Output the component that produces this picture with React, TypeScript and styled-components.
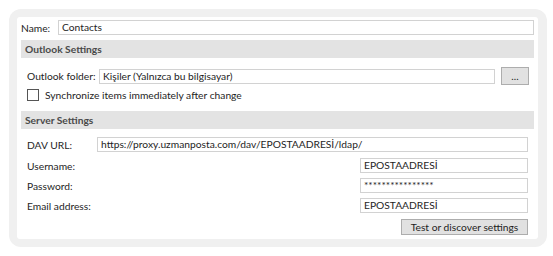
import React from 'react';
import styled, { createGlobalStyle } from 'styled-components';

const GlobalStyle = createGlobalStyle`
    html, body {
        margin: 0;
        padding: 0;
        background: #fff;
    }
    body {
        font-family: Lato, 'Open Sans', sans-serif;
        font-size: 10.25px;
        color: #1e1e1e;
    }
`;

const Frame = styled.div`
    margin: 9px 0 0 9px;
    width: 538px;
    height: 238px;
    box-sizing: border-box;
    padding: 8px 9px 8px 8px;
    background: #f0f0f0;
    border-radius: 12px;
`;

const Sheet = styled.div`
    height: 100%;
    background: #fff;
    border-radius: 3px;
    padding: 0 4px;
    box-sizing: border-box;
    display: flex;
    flex-direction: column;
`;

const Row = styled.div<{ $mt: number; $h?: number; $pl?: number }>`
    display: flex;
    align-items: center;
    flex: 0 0 auto;
    height: ${(p) => p.$h ?? 15}px;
    margin-top: ${(p) => p.$mt}px;
    padding-left: ${(p) => p.$pl ?? 0}px;
`;

const SplitRow = styled(Row)`
    justify-content: space-between;
    padding-right: 6px;
`;

const Label = styled.span<{ $w?: number }>`
    flex: 0 0 auto;
    width: ${(p) => (p.$w ? `${p.$w}px` : 'auto')};
    white-space: nowrap;
`;

const Field = styled.div<{ $w?: number }>`
    flex: ${(p) => (p.$w ? '0 0 auto' : '1 1 auto')};
    width: ${(p) => (p.$w ? `${p.$w}px` : 'auto')};
    height: 15px;
    box-sizing: border-box;
    border: 1px solid #d2d2d2;
    padding: 0 3px;
    line-height: 13px;
    white-space: nowrap;
    overflow: hidden;
`;

const Header = styled.div<{ $mt: number }>`
    flex: 0 0 auto;
    margin-top: ${(p) => p.$mt}px;
    height: 18px;
    background: #e3e3e3;
    padding-left: 4px;
    font-weight: 700;
    color: #4a4a4a;
    line-height: 18px;
`;

const Button = styled.div<{ $w: number; $h: number }>`
    width: ${(p) => p.$w}px;
    height: ${(p) => p.$h}px;
    box-sizing: border-box;
    border: 1px solid #adadad;
    background: #e1e1e1;
    display: flex;
    align-items: center;
    justify-content: center;
    flex: 0 0 auto;
`;

const BrowseButton = styled(Button)`
    margin: 0 5px 0 6px;
    line-height: 1;
`;

const Box = styled.span`
    width: 12px;
    height: 12px;
    box-sizing: border-box;
    border: 1px solid #555;
    background: #fff;
    margin-right: 6px;
`;

export default function App() {
    return (
        <>
            <GlobalStyle />
            <Frame>
                <Sheet>
                    <Row $mt={3}>
                        <Label $w={37}>Name:</Label>
                        <Field>Contacts</Field>
                    </Row>
                    <Header $mt={5}>Outlook Settings</Header>
                    <Row $mt={9} $h={18} $pl={6}>
                        <Label $w={72}>Outlook folder:</Label>
                        <Field>Kişiler (Yalnızca bu bilgisayar)</Field>
                        <BrowseButton $w={28} $h={18}>...</BrowseButton>
                    </Row>
                    <Row $mt={4} $h={12} $pl={6}>
                        <Box />
                        Synchronize items immediately after change
                    </Row>
                    <Header $mt={10}>Server Settings</Header>
                    <SplitRow $mt={8} $pl={6}>
                        <Label $w={70}>DAV URL:</Label>
                        <Field>https://proxy.uzmanposta.com/dav/EPOSTAADRESİ/ldap/</Field>
                    </SplitRow>
                    <SplitRow $mt={6} $pl={6}>
                        <Label>Username:</Label>
                        <Field $w={168}>EPOSTAADRESİ</Field>
                    </SplitRow>
                    <SplitRow $mt={5} $pl={6}>
                        <Label>Password:</Label>
                        <Field $w={168}>****************</Field>
                    </SplitRow>
                    <SplitRow $mt={5} $pl={6}>
                        <Label>Email address:</Label>
                        <Field $w={168}>EPOSTAADRESİ</Field>
                    </SplitRow>
                    <SplitRow $mt={6} $h={16}>
                        <span />
                        <Button $w={127} $h={16}>Test or discover settings</Button>
                    </SplitRow>
                </Sheet>
            </Frame>
        </>
    );
}
